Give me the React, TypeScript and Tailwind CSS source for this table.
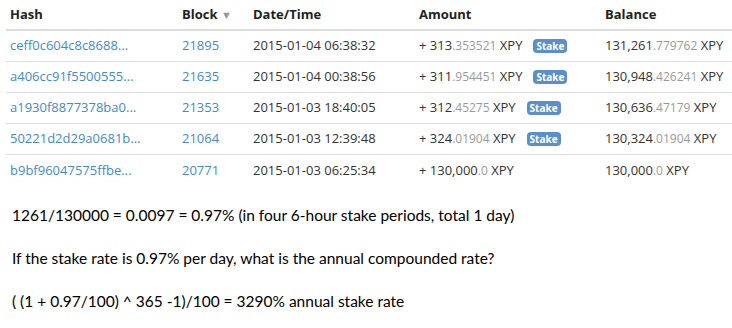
import React from 'react';

type Row = {
  hash: string;
  block: string;
  date: string;
  amtInt: string;
  amtDec: string;
  balInt: string;
  balDec: string;
  stake: boolean;
};

const rows: Row[] = [
  { hash: 'ceff0c604c8c8688...', block: '21895', date: '2015-01-04 06:38:32', amtInt: '313', amtDec: '.353521', balInt: '131,261', balDec: '.779762', stake: true },
  { hash: 'a406cc91f5500555...', block: '21635', date: '2015-01-04 00:38:56', amtInt: '311', amtDec: '.954451', balInt: '130,948', balDec: '.426241', stake: true },
  { hash: 'a1930f8877378ba0...', block: '21353', date: '2015-01-03 18:40:05', amtInt: '312', amtDec: '.45275', balInt: '130,636', balDec: '.47179', stake: true },
  { hash: '50221d2d29a0681b...', block: '21064', date: '2015-01-03 12:39:48', amtInt: '324', amtDec: '.01904', balInt: '130,324', balDec: '.01904', stake: true },
  { hash: 'b9bf96047575ffbe...', block: '20771', date: '2015-01-03 06:25:34', amtInt: '130,000', amtDec: '.0', balInt: '130,000', balDec: '.0', stake: false },
];

const cols = 'grid grid-cols-[172px_71px_166px_186px_1fr]';

export default function App() {
  return (
    <div className="w-[732px] h-[328px] bg-white overflow-hidden">
      <div className="ml-[6px] font-['Open_Sans',sans-serif] text-[13px] text-[#333]">
        <div className={`${cols} h-[31px] items-center pl-[4px] font-bold text-[#222] border-b-2 border-[#ddd]`}>
          <span>Hash</span>
          <span>
            Block <span className="text-[#999] text-[11px]">▼</span>
          </span>
          <span>Date/Time</span>
          <span>Amount</span>
          <span>Balance</span>
        </div>
        {rows.map((r, i) => (
          <div
            key={r.hash}
            className={`${cols} h-[31px] items-center pl-[4px] ${i < rows.length - 1 ? 'border-b border-[#ddd]' : ''}`}
          >
            <span className="text-[#428bca]">{r.hash}</span>
            <span className="text-[#428bca]">{r.block}</span>
            <span>{r.date}</span>
            <span className="flex items-center">
              <span>
                + {r.amtInt}
                <span className="text-[#999] text-[12px]">{r.amtDec}</span> XPY
              </span>
              {r.stake && (
                <span className="ml-[11px] rounded-[4px] bg-[#5b8fcb] text-white text-[10px] font-bold leading-none px-[3px] py-[2px]">
                  Stake
                </span>
              )}
            </span>
            <span>
              {r.balInt}
              <span className="text-[#999] text-[12px]">{r.balDec}</span> XPY
            </span>
          </div>
        ))}
      </div>
      <div className="pl-[12px] pt-[19px] font-['Lato',sans-serif] text-[15.5px] leading-[21px] text-black space-y-[22px]">
        <p>1261/130000 = 0.0097 = 0.97% (in four 6-hour stake periods, total 1 day)</p>
        <p>If the stake rate is 0.97% per day, what is the annual compounded rate?</p>
        <p>( (1 + 0.97/100) ^ 365 -1)/100 = 3290% annual stake rate</p>
      </div>
    </div>
  );
}
